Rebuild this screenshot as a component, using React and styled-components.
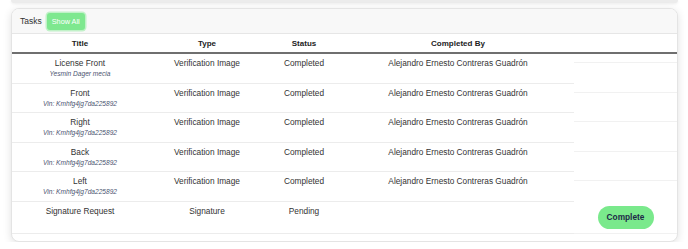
import React from "react";
import styled, { createGlobalStyle } from "styled-components";

const Global = createGlobalStyle`
  html, body { margin: 0; padding: 0; background: #ffffff; }
  body { font-family: "Liberation Sans", Arial, sans-serif; color: #333; }
`;

const Page = styled.div`
  padding: 0 10px 0 11px;
  display: flex;
  flex-direction: column;
  gap: 5px;
`;

const PrevCard = styled.div`
  height: 3px;
  background: #ececec;
  border-radius: 0 0 8px 8px;
  box-shadow: 0 1px 3px rgba(0, 0, 0, 0.08);
`;

const Card = styled.div`
  background: #fff;
  border: 1px solid #e4e4e4;
  border-radius: 8px;
  box-shadow: 0 2px 8px rgba(0, 0, 0, 0.12);
  padding-bottom: 7px;
  overflow: hidden;
`;

const CardHeader = styled.div`
  height: 24px;
  display: flex;
  align-items: center;
  gap: 5px;
  padding: 0 8px;
  background: #f8f8f8;
  border-bottom: 1px solid #e6e6e6;
`;

const HeaderLabel = styled.span`
  font-size: 8.5px;
  color: #333;
`;

const ShowAll = styled.button`
  height: 17px;
  padding: 0 5px;
  border: none;
  border-radius: 3px;
  background: #7ee88f;
  box-shadow: 0 0 0 1.5px rgba(126, 232, 143, 0.45);
  color: #fff;
  font-family: "Liberation Sans", Arial, sans-serif;
  font-size: 7.3px;
  font-weight: 500;
`;

const Row = styled.div`
  display: grid;
  grid-template-columns: 136px 118px 76px 232px 1fr;
  border-bottom: ${(p) => (p.$head ? "2px solid #6f6f6f" : "none")};
`;

const HeadCell = styled.div`
  padding: 4px 4px 3px;
  line-height: 11px;
  font-size: 8px;
  font-weight: 700;
  color: #222;
  text-align: center;
`;

const Cell = styled.div`
  padding: 4px 4px 3.5px;
  border-bottom: 1px solid #ececec;
  text-align: center;
  font-size: 8.3px;
  line-height: 11px;
  color: #333;
`;

const Sub = styled.div`
  font-size: 6.6px;
  line-height: 10px;
  font-style: italic;
  color: #4b5470;
`;

const ActionCell = styled.div`
  align-self: start;
  padding: 4px 4px;
  border-bottom: 1px solid #f1f1f1;
  display: flex;
  justify-content: center;
`;

const CompleteButton = styled.button`
  height: 23px;
  width: 56px;
  border: none;
  border-radius: 12px;
  background: #7ae98c;
  color: #1d2847;
  font-family: "Liberation Sans", Arial, sans-serif;
  font-size: 8.3px;
  font-weight: 700;
  padding: 0;
`;

const rows = [
  { title: "License Front", sub: "Yesmin Dager mecia", type: "Verification Image", status: "Completed", by: "Alejandro Ernesto Contreras Guadrón" },
  { title: "Front", sub: "Vin: Kmhfg4jg7da225892", type: "Verification Image", status: "Completed", by: "Alejandro Ernesto Contreras Guadrón" },
  { title: "Right", sub: "Vin: Kmhfg4jg7da225892", type: "Verification Image", status: "Completed", by: "Alejandro Ernesto Contreras Guadrón" },
  { title: "Back", sub: "Vin: Kmhfg4jg7da225892", type: "Verification Image", status: "Completed", by: "Alejandro Ernesto Contreras Guadrón" },
  { title: "Left", sub: "Vin: Kmhfg4jg7da225892", type: "Verification Image", status: "Completed", by: "Alejandro Ernesto Contreras Guadrón" },
  { title: "Signature Request", type: "Signature", status: "Pending", by: "", action: true },
];

export default function App() {
  return (
    <>
      <Global />
      <Page>
        <PrevCard />
        <Card>
          <CardHeader>
            <HeaderLabel>Tasks</HeaderLabel>
            <ShowAll>Show All</ShowAll>
          </CardHeader>
          <Row $head>
            <HeadCell>Title</HeadCell>
            <HeadCell>Type</HeadCell>
            <HeadCell>Status</HeadCell>
            <HeadCell>Completed By</HeadCell>
            <HeadCell />
          </Row>
          {rows.map((r, i) => (
            <Row key={i}>
              <Cell>
                {r.title}
                {r.sub && <Sub>{r.sub}</Sub>}
              </Cell>
              <Cell>{r.type}</Cell>
              <Cell>{r.status}</Cell>
              <Cell>{r.by}</Cell>
              <ActionCell>{r.action && <CompleteButton>Complete</CompleteButton>}</ActionCell>
            </Row>
          ))}
        </Card>
      </Page>
    </>
  );
}
